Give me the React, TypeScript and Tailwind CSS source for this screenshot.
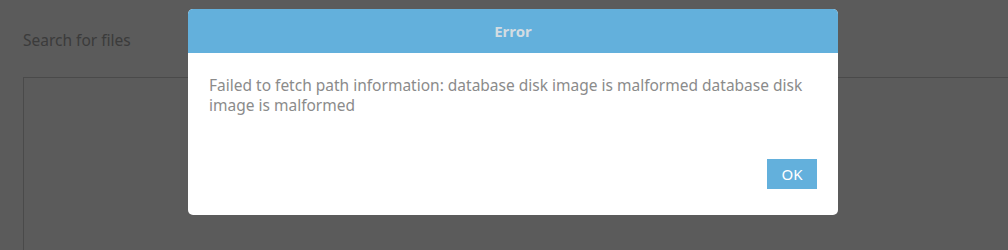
import React from 'react'

const font = { fontFamily: '"Noto Sans", "Open Sans", sans-serif' }

export default function App() {
  return (
    <div className="relative h-[250px] w-full overflow-hidden bg-white" style={font}>
      {/* page underneath */}
      <div className="pl-[23px] pt-[30px]">
        <h2 className="text-[15.5px] leading-[20px] text-[#a6a6a6]">Search for files</h2>
        <div className="mt-[27px] h-[300px] w-[1100px] border border-[#cfcfcf]" />
      </div>

      {/* modal overlay */}
      <div className="absolute inset-0 bg-black/[0.643]">
        <div className="ml-[188px] mt-[9px] w-[650px] overflow-hidden rounded-[5px] bg-white">
          <div className="flex h-[44px] items-center justify-center bg-[#63b0dc]">
            <span className="text-[15px] font-bold text-[#d3dce2]">Error</span>
          </div>
          <div className="px-[21px] pt-[22px] text-[15.5px] leading-[20px] text-[#8b8b8b]">
            Failed to fetch path information: database disk image is malformed database disk image is malformed
          </div>
          <div className="flex justify-end px-[21px] pb-[26px] pt-[44px]">
            <button className="h-[30px] w-[50px] bg-[#63b0dc] text-[15px] text-white">OK</button>
          </div>
        </div>
      </div>
    </div>
  )
}
